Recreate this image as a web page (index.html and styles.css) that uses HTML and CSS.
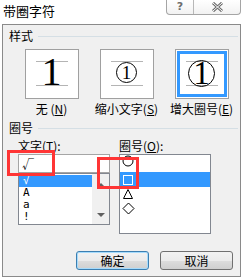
FILE: index.html
```html
<!DOCTYPE html>
<html lang="zh-CN">
<head>
    <meta charset="UTF-8">
    <meta name="viewport" content="width=device-width, initial-scale=1.0">
    <title>带圈字符</title>
    <link rel="stylesheet" href="styles.css">
</head>
<body>
    <div class="titlebar">
        <div class="title">带圈字符</div>
        <div class="caption">
            <div class="cap-btn help">?</div>
            <div class="cap-btn close">
                <svg width="13" height="10" viewBox="0 0 13 10">
                    <path d="M2 1 L11 9 M11 1 L2 9" stroke="#6d6d6d" stroke-width="3" fill="none"/>
                    <path d="M2 1 L11 9 M11 1 L2 9" stroke="#ffffff" stroke-width="1" fill="none"/>
                </svg>
            </div>
        </div>
    </div>

    <div class="dialog">
        <div class="group-head">样式</div>
        <div class="styles">
            <div class="style-item">
                <div class="preview">
                    <div class="guide"><span class="num-big">1</span></div>
                </div>
                <div class="style-label">无 (<u>N</u>)</div>
            </div>
            <div class="style-item">
                <div class="preview">
                    <div class="guide"><span class="ring"><span class="num-sm">1</span></span></div>
                </div>
                <div class="style-label">缩小文字(<u>S</u>)</div>
            </div>
            <div class="style-item">
                <div class="preview active">
                    <div class="guide"><span class="ring big"><span class="num-lg">1</span></span></div>
                </div>
                <div class="style-label">增大圈号(<u>E</u>)</div>
            </div>
        </div>

        <div class="group-head">圈号</div>
        <div class="pick">
            <div class="col">
                <div class="col-label">文字(<u>T</u>):</div>
                <div class="text-input">√</div>
                <div class="list">
                    <div class="items">
                        <div class="item sel">√</div>
                        <div class="item">A</div>
                        <div class="item">a</div>
                        <div class="item">!</div>
                    </div>
                    <div class="scrollbar">
                        <span class="arrow up"></span>
                        <span class="arrow down"></span>
                    </div>
                </div>
            </div>
            <div class="col">
                <div class="col-label">圈号(<u>O</u>):</div>
                <div class="shape-list">
                    <div class="shape-item first">
                        <svg width="12" height="12" viewBox="0 0 12 12"><circle cx="6" cy="6" r="5" stroke="#000" fill="none"/></svg>
                    </div>
                    <div class="shape-item sel">
                        <svg width="12" height="12" viewBox="0 0 12 12"><rect x="1.5" y="1.5" width="9" height="9" stroke="#fff" fill="none"/></svg>
                    </div>
                    <div class="shape-item">
                        <svg width="12" height="12" viewBox="0 0 12 12"><path d="M6 1.5 L10.5 10.5 L1.5 10.5 Z" stroke="#000" fill="none"/></svg>
                    </div>
                    <div class="shape-item">
                        <svg width="13" height="13" viewBox="0 0 13 13"><path d="M6.5 1 L12 6.5 L6.5 12 L1 6.5 Z" stroke="#000" fill="none"/></svg>
                    </div>
                </div>
            </div>
        </div>

        <div class="actions">
            <button class="btn default">确定</button>
            <button class="btn">取消</button>
        </div>
    </div>

    <!-- annotation marks -->
    <div class="mark mark-a"></div>
    <div class="mark mark-b"></div>
</body>
</html>
```

FILE: styles.css
```css
body {
    margin: 0;
    width: 243px;
    height: 280px;
    overflow: hidden;
    position: relative;
    background-color: #ffffff;
    color: #000;
    font-family: "Noto Sans CJK SC", "Liberation Sans", sans-serif;
    font-size: 12px;
}
.titlebar {
    display: flex;
    justify-content: space-between;
    height: 24px;
}
.title {
    padding: 3px 0 0 3px;
    font-size: 13px;
    line-height: 16px;
}
.caption {
    display: flex;
    width: 75px;
    height: 15px;
    box-sizing: border-box;
    margin-right: 2px;
    border: 1px solid #a5a5a5;
    border-top: none;
    border-radius: 0 0 4px 4px;
    background: linear-gradient(#ffffff, #f2f2f2);
}
.cap-btn {
    display: flex;
    align-items: center;
    justify-content: center;
}
.help {
    width: 26px;
    border-right: 1px solid #b8b8b8;
    font-family: "DejaVu Sans", sans-serif;
    font-size: 11px;
    font-weight: bold;
    line-height: 12px;
    color: #6d6d6d;
}
.close {
    flex: 1;
}
.dialog {
    margin: 0 2px;
    height: 253px;
    box-sizing: border-box;
    border: 1px solid #8a8a8a;
    background-color: #f0f0f0;
}
.group-head {
    display: flex;
    align-items: center;
    padding: 3px 2px 0 6px;
    line-height: 16px;
}
.group-head::after {
    content: "";
    flex: 1;
    height: 1px;
    margin-left: 5px;
    background-color: #d5dfe5;
}
.styles {
    display: grid;
    grid-template-columns: repeat(3, 75px);
    padding-left: 11px;
    margin-top: 5px;
}
.style-item {
    display: flex;
    flex-direction: column;
    align-items: center;
}
.preview {
    width: 54px;
    height: 50px;
    box-sizing: border-box;
    border: 1px solid #a0a0a0;
    background-color: #fff;
}
.preview.active {
    box-shadow: inset 0 0 0 1px #fff, inset 0 0 0 4px #3399ff;
}
.guide {
    width: 32px;
    height: 25px;
    box-sizing: border-box;
    margin: 11px auto 0;
    border-top: 1px solid #b4b4b4;
    border-bottom: 1px solid #b4b4b4;
    display: flex;
    align-items: center;
    justify-content: center;
}
.num-big {
    font-family: "Liberation Serif", serif;
    font-size: 40px;
    line-height: 40px;
    margin-top: -4px;
}
.ring {
    flex-shrink: 0;
    width: 21px;
    height: 21px;
    box-sizing: border-box;
    border: 1px solid #000;
    border-radius: 50%;
    display: flex;
    align-items: center;
    justify-content: center;
    margin-top: -2px;
}
.ring.big {
    width: 27px;
    height: 27px;
    margin-top: 0;
}
.num-sm {
    font-family: "Liberation Serif", serif;
    font-size: 19px;
    line-height: 19px;
}
.num-lg {
    font-family: "Liberation Serif", serif;
    font-size: 33px;
    line-height: 33px;
}
.style-label {
    margin-top: 2px;
    line-height: 16px;
}
.pick {
    display: flex;
    align-items: flex-start;
    gap: 9px;
    padding-left: 15px;
    margin-top: 2px;
}
.col {
    width: 92px;
}
.col-label {
    line-height: 16px;
}
.text-input {
    height: 19px;
    box-sizing: border-box;
    border: 1px solid #a5a5a5;
    background-color: #fff;
    padding-left: 3px;
    line-height: 17px;
}
.list {
    display: flex;
    height: 52px;
    box-sizing: border-box;
    border: 1px solid #828790;
    background-color: #fff;
}
.items {
    flex: 1;
    padding-top: 1px;
}
.item {
    height: 12px;
    overflow: hidden;
    padding-left: 4px;
    font-family: "DejaVu Sans Mono", "Noto Sans CJK SC", monospace;
    font-size: 11px;
    line-height: 12px;
    color: #000;
}
.item.sel,
.shape-item.sel {
    background-color: #3399ff;
    color: #fff;
}
.scrollbar {
    width: 17px;
    box-sizing: border-box;
    padding: 9px 0 7px;
    display: flex;
    flex-direction: column;
    justify-content: space-between;
    align-items: center;
    background-color: #f0f0f0;
}
.arrow {
    width: 0;
    height: 0;
    border-left: 4px solid transparent;
    border-right: 4px solid transparent;
}
.arrow.up {
    border-bottom: 4px solid #606060;
}
.arrow.down {
    border-top: 4px solid #606060;
}
.shape-list {
    height: 80px;
    box-sizing: border-box;
    border: 1px solid #828790;
    background-color: #fff;
}
.shape-item {
    display: flex;
    align-items: center;
    height: 14px;
    padding-left: 2px;
}
.shape-item.first {
    height: 17px;
    align-items: flex-start;
}
.shape-item.sel {
    height: 15px;
}
.actions {
    display: flex;
    justify-content: flex-end;
    gap: 11px;
    padding-right: 7px;
    margin-top: 17px;
}
.btn {
    width: 73px;
    height: 19px;
    box-sizing: border-box;
    padding: 0;
    border: 1px solid #707070;
    border-radius: 3px;
    background: linear-gradient(#f2f2f2 0%, #ebebeb 50%, #dddddd 51%, #cfcfcf 100%);
    font-family: "Noto Sans CJK SC", sans-serif;
    font-size: 12px;
    line-height: 16px;
    color: #000;
}
.btn.default {
    border-color: #3c7fb1;
    box-shadow: inset 0 0 0 1px #a6dbfc;
}
.mark {
    position: absolute;
    box-sizing: border-box;
    border: 3px solid #ff3535;
}
.mark-a {
    left: 7px;
    top: 150px;
    width: 48px;
    height: 26px;
}
.mark-b {
    left: 97px;
    top: 157px;
    width: 42px;
    height: 32px;
}
```
